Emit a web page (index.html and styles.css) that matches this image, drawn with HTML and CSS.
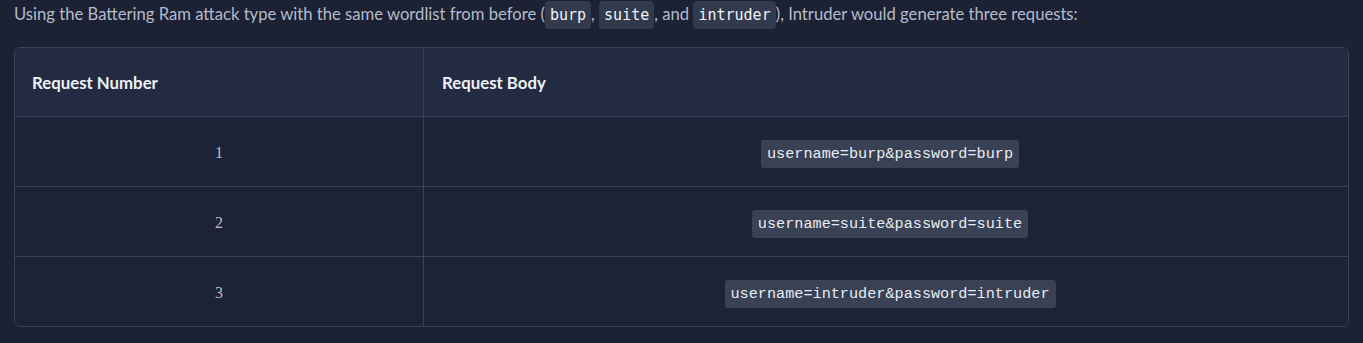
FILE: index.html
```html
<!DOCTYPE html>
<html lang="en">
<head>
    <meta charset="UTF-8">
    <meta name="viewport" content="width=device-width, initial-scale=1.0">
    <title>Intruder | Battering Ram</title>
    <link rel="stylesheet" href="styles.css">
</head>
<body>

    <p class="intro">Using the Battering Ram attack type with the same wordlist from before (<code>burp</code>, <code>suite</code>, and <code>intruder</code>), Intruder would generate three requests:</p>

    <!-- Requests generated by the attack -->
    <div class="table-wrap">
        <table>
            <thead>
                <tr>
                    <th class="col-num">Request Number</th>
                    <th>Request Body</th>
                </tr>
            </thead>
            <tbody>
                <tr>
                    <td class="num">1</td>
                    <td class="body"><code>username=burp&amp;password=burp</code></td>
                </tr>
                <tr>
                    <td class="num">2</td>
                    <td class="body"><code>username=suite&amp;password=suite</code></td>
                </tr>
                <tr>
                    <td class="num">3</td>
                    <td class="body"><code>username=intruder&amp;password=intruder</code></td>
                </tr>
            </tbody>
        </table>
    </div>

</body>
</html>
```

FILE: styles.css
```css
body {
    margin: 0;
    padding: 0 14px;
    background-color: #1c2134;
    font-family: Lato, "Open Sans", sans-serif;
    color: #b3bccc;
}
.intro {
    margin: 0;
    padding-top: 1px;
    font-size: 16.65px;
    line-height: 27px;
}
.intro code {
    font-family: "DejaVu Sans Mono", monospace;
    font-size: 15px;
    color: #f1f3f7;
    background: #323a4e;
    padding: 5px 5px;
    border-radius: 4px;
}
.table-wrap {
    margin-top: 18px;
    border: 1px solid #3a4257;
    border-radius: 6px;
    overflow: hidden;
}
table {
    width: 100%;
    border-collapse: collapse;
}
th {
    background: #222b42;
    color: #eef1f6;
    font-weight: bold;
    font-size: 16.8px;
    text-align: left;
    height: 68px;
    padding: 0 18px;
    border-bottom: 1px solid #3a4257;
}
.col-num {
    width: 373px;
    border-right: 1px solid #3a4257;
    padding-left: 17px;
}
td {
    height: 67px;
    padding: 2px 0 0;
    background: #1d2237;
    text-align: center;
    border-top: 1px solid #3a4257;
}
.num {
    font-family: "Liberation Serif", serif;
    font-size: 16px;
    color: #b3bccc;
    border-right: 1px solid #3a4257;
}
.body {
    padding-left: 8px;
}
.body code {
    font-family: "Liberation Mono", monospace;
    font-size: 15.2px;
    color: #e8ebf1;
    background: #394155;
    padding: 5px 6px;
    border-radius: 3px;
}
```
